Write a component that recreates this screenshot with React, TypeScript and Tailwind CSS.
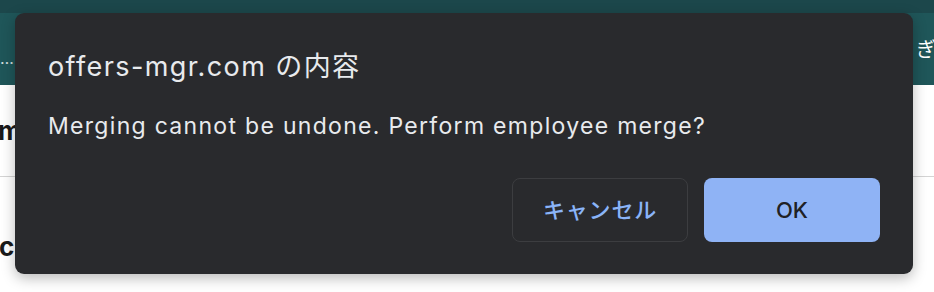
export default function App() {
  const font = { fontFamily: 'Inter, "Noto Sans CJK JP", sans-serif' };
  return (
    <div className="relative w-[934px] h-[292px] overflow-hidden bg-white" style={font}>
      {/* page behind the dialog */}
      <div className="h-[13px] bg-[#1c474b]" />
      <div className="h-[72px] bg-[#1f5659] flex items-start justify-between">
        <span className="text-white/80 text-[16px] leading-none mt-[37px] tracking-[1px]">…</span>
        <span className="text-white text-[20px] leading-none mt-[27px] -mr-[2px]">ぎ</span>
      </div>
      <div className="h-[92px] flex items-center border-b border-[#d4d4d4]">
        <span className="text-[26px] font-bold text-[#1a1a1a] -ml-[2px]">m</span>
      </div>
      <div className="h-[114px] pt-[52px]">
        <span className="text-[26px] font-bold leading-[36px] text-[#1a1a1a] -ml-[1px]">c</span>
      </div>

      {/* alert dialog */}
      <div className="absolute left-[15px] top-[13px] w-[898px] h-[261px] rounded-[9px] bg-[#292a2d] shadow-[0_4px_14px_rgba(0,0,0,0.28)] px-[33px] pt-[35px] flex flex-col">
        <div className="text-[27px] leading-[38px] tracking-[1.4px] text-[#e8eaed]">offers-mgr.com の内容</div>
        <div className="mt-[25px] text-[23px] leading-[30px] tracking-[1.3px] text-[#e8eaed]">
          Merging cannot be undone. Perform employee merge?
        </div>
        <div className="mt-auto mb-[32px] flex justify-end gap-[16px]">
          <button className="w-[176px] h-[64px] rounded-[8px] border border-[#3c3d40] text-[#8ab4f8] text-[22px] tracking-[0.8px] font-medium">
            キャンセル
          </button>
          <button className="w-[176px] h-[64px] rounded-[8px] bg-[#8fb3f5] text-[#202124] text-[22px] font-medium">
            OK
          </button>
        </div>
      </div>
    </div>
  );
}
